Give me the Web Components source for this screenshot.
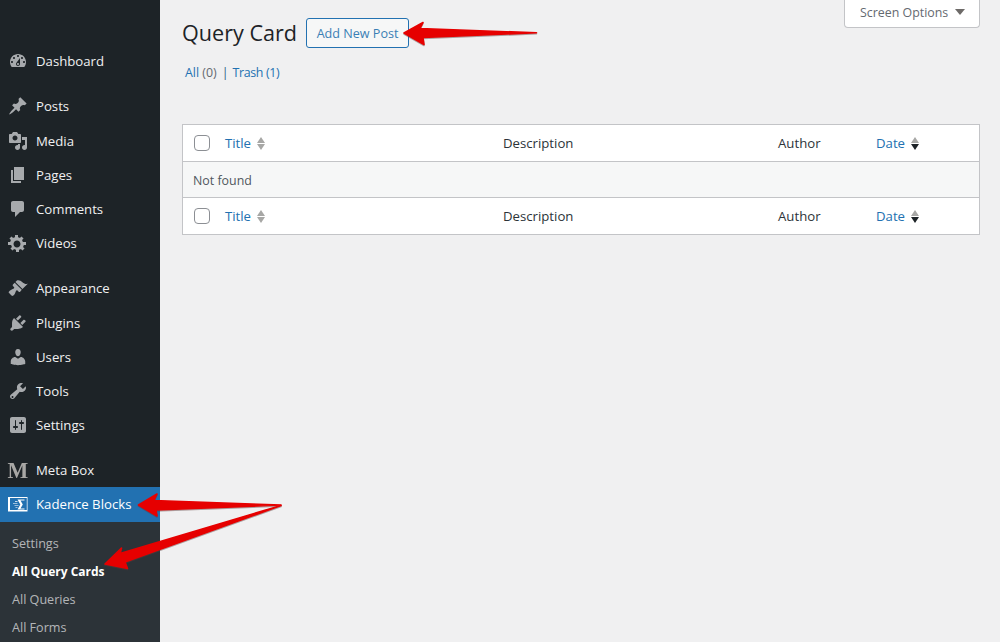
<!DOCTYPE html>
<html><head><meta charset="utf-8"><style>
html,body{margin:0;padding:0;height:642px;overflow:hidden;background:#f0f0f1;font-family:"Open Sans","Noto Sans",sans-serif}
wp-app{display:flex;height:642px;position:relative}
</style></head><body>
<wp-app>
  <wp-sidebar></wp-sidebar>
  <wp-main></wp-main>
  <wp-arrows></wp-arrows>
</wp-app>
<script>
const ICONS={
dashboard:'M3.76 16h12.48c1.1-1.37 1.76-3.11 1.76-5 0-4.42-3.58-8-8-8s-8 3.58-8 8c0 1.89.66 3.63 1.76 5zM10 4c.55 0 1 .45 1 1s-.45 1-1 1-1-.45-1-1 .45-1 1-1zM6 6c.55 0 1 .45 1 1s-.45 1-1 1-1-.45-1-1 .45-1 1-1zm8 0c.55 0 1 .45 1 1s-.45 1-1 1-1-.45-1-1 .45-1 1-1zm-5.37 5.55L12 7v6c0 1.1-.9 2-2 2s-2-.9-2-2c0-.57.24-1.08.63-1.45zM4 10c.55 0 1 .45 1 1s-.45 1-1 1-1-.45-1-1 .45-1 1-1zm12 0c.55 0 1 .45 1 1s-.45 1-1 1-1-.45-1-1 .45-1 1-1zm-5 3c0-.55-.45-1-1-1s-1 .45-1 1 .45 1 1 1 1-.45 1-1z',
post:'M10.44 3.02l1.82-1.82 6.36 6.35-1.83 1.82c-1.05-.68-2.48-.57-3.41.36l-.75.75c-.92.93-1.04 2.35-.35 3.41l-1.83 1.82-2.41-2.41-2.8 2.79c-.42.42-3.38 2.71-3.8 2.29s1.86-3.39 2.28-3.81l2.79-2.79L4.1 9.36l1.83-1.82c1.05.69 2.48.57 3.4-.36l.75-.75c.93-.92 1.05-2.35.36-3.41z',
media:'M13 11V4c0-.55-.45-1-1-1h-1.67L9 1H5L3.67 3H2c-.55 0-1 .45-1 1v7c0 .55.45 1 1 1h10c.55 0 1-.45 1-1zM7 4.5c1.38 0 2.5 1.12 2.5 2.5S8.38 9.5 7 9.5 4.5 8.38 4.5 7 5.62 4.5 7 4.5zM14 6h5v10.5c0 1.38-1.12 2.5-2.5 2.5S14 17.88 14 16.5s1.12-2.5 2.5-2.5c.17 0 .34.02.5.05V9h-3V6zm-4 8.05V13h2v3.5c0 1.38-1.12 2.5-2.5 2.5S7 17.88 7 16.5 8.12 14 9.5 14c.17 0 .34.02.5.05z',
page:'M6 15V2h10v13H6zm-1 1h8v2H3V5h2v11z',
comments:'M5 2h9c1.1 0 2 .9 2 2v7c0 1.1-.9 2-2 2h-2l-5 5v-5H5c-1.1 0-2-.9-2-2V4c0-1.1.9-2 2-2z',
gear:'M18 12h-2.18c-.17.7-.44 1.35-.81 1.93l1.54 1.54-2.1 2.1-1.54-1.54c-.58.36-1.23.64-1.91.81V19H8v-2.16c-.68-.17-1.33-.45-1.91-.81l-1.54 1.54-2.12-2.12 1.54-1.54c-.36-.58-.64-1.23-.81-1.91H0V9h2.16c.17-.68.45-1.33.81-1.91L1.43 5.55l2.12-2.12 1.54 1.54c.58-.36 1.23-.64 1.91-.81V2h3v2.16c.68.17 1.33.45 1.91.81l1.54-1.54 2.12 2.12-1.54 1.54c.36.58.64 1.23.81 1.91H18zm-9 2.5c1.93 0 3.5-1.57 3.5-3.5S10.93 7.5 9 7.5 5.5 9.07 5.5 11s1.57 3.5 3.5 3.5z',
appearance:'M14.48 11.06L7.41 3.99l1.5-1.5c.5-.56 2.3-.47 3.51.32 1.21.8 1.43 1.28 2.91 2.1 1.18.64 2.45 1.26 4.45.85zm-.71.71L6.7 4.7 4.93 6.47c-.39.39-.39 1.02 0 1.41l1.06 1.06c.39.39.39 1.03 0 1.42-.6.6-1.6 1.06-3.48 1.85-1.1.47-1.93 1.97-1.93 1.97s2.39 3.21 3.95 3.91c0 0 1.65-.92 2.19-1.99.81-1.63.92-2.87 1.51-3.46.4-.39 1.04-.39 1.43 0l1.06 1.06c.39.39 1.02.39 1.41 0z',
plugin:'M13.11 4.36L9.87 7.6 8 5.73l3.24-3.24c.35-.34 1.05-.2 1.56.32.52.51.66 1.21.31 1.55zm-8 1.77l.91-1.12 9.01 9.01-1.19.84c-.71.71-2.63 1.16-3.82 1.16H6.14L4.9 17.26c-.59.59-1.54.59-2.12 0-.59-.58-.59-1.53 0-2.12l1.24-1.24v-3.88c0-1.13.4-3.19 1.09-3.89zm7.26 3.97l3.24-3.24c.34-.35 1.04-.21 1.55.31.52.51.66 1.21.31 1.55l-3.24 3.25z',
users:'M10 9.25c-2.27 0-2.73-3.44-2.73-3.44C7 4.02 7.82 2 9.97 2c2.16 0 2.98 2.02 2.71 3.81 0 0-.41 3.44-2.68 3.44zm0 2.57L12.72 10c2.39 0 4.52 2.33 4.52 4.53v2.49s-3.65 1.13-7.24 1.13c-3.65 0-7.24-1.13-7.24-1.13v-2.49c0-2.25 1.94-4.48 4.47-4.48z',
tools:'M16.68 9.77c-1.34 1.34-3.3 1.67-4.95.99l-5.41 6.52c-.99.99-2.59.99-3.57 0-.99-.98-.99-2.58 0-3.57l6.52-5.42c-.68-1.65-.35-3.61.99-4.95 1.28-1.28 3.12-1.62 4.72-1.06l-2.89 2.89 2.82 2.82 2.86-2.86c.53 1.58.18 3.4-1.09 4.64zM3.81 16.74c.39.39 1.03.39 1.42 0 .39-.4.39-1.03 0-1.42-.39-.39-1.03-.39-1.42 0-.39.39-.39 1.02 0 1.42z',
settings:'M18 16V4c0-1.1-.9-2-2-2H4c-1.1 0-2 .9-2 2v12c0 1.1.9 2 2 2h12c1.1 0 2-.9 2-2zM8 11h1c.55 0 1 .45 1 1s-.45 1-1 1H8v1.5c0 .28-.22.5-.5.5s-.5-.22-.5-.5V13H6c-.55 0-1-.45-1-1s.45-1 1-1h1V5.5c0-.28.22-.5.5-.5s.5.22.5.5V11zm5-2h-1c-.55 0-1-.45-1-1s.45-1 1-1h1V5.5c0-.28.22-.5.5-.5s.5.22.5.5V7h1c.55 0 1 .45 1 1s-.45 1-1 1h-1v5.5c0 .28-.22.5-.5.5s-.5-.22-.5-.5V9z'
};
function def(name,html){customElements.define(name,class extends HTMLElement{constructor(){super();this.attachShadow({mode:'open'}).innerHTML=html;}});}

customElements.define('wp-menu-item',class extends HTMLElement{
  connectedCallback(){
    if(this.shadowRoot) return;
    const ic=this.getAttribute('icon');
    let g;
    if(ic==='meta') g='<span class="m">M</span>';
    else if(ic==='kadence') g='<svg class="k" width="20" height="20" viewBox="0 0 20 20"><path fill="#fff" fill-rule="evenodd" d="M0 3h19.500v14.500H0zM2 4v12h16.800V4z"/><path fill="#fff" d="M9.500 5.500h7v1.100h-4l2.300 3.900-2.300 3.900h4v1.100h-7l2.800-5z"/><path fill="#fff" opacity=".75" d="M5 9.200h4.500v.9H5zM6.500 11.200h4v.9h-4zM7 7h2.500v.9H7zM7.500 13.200h2v.9h-2z"/></svg>';
    else g=`<svg width="20" height="20" viewBox="0 0 20 20"><path fill="currentColor" d="${ICONS[ic]}"/></svg>`;
    this.attachShadow({mode:'open'}).innerHTML=`<style>
    :host{display:flex;align-items:center;height:34px;color:#f0f0f1;font-size:13.2px;box-sizing:border-box}
    :host([first]){height:35px;padding-bottom:1px}
    :host([current]){background:#2271b1;color:#fff;height:35px;padding-bottom:1px}
    .i{width:36px;flex:none;display:flex;justify-content:center;color:#a7aaad}
    :host([current]) .i{color:#fff}
    svg{display:block;margin-left:-1px}
    svg.k{margin-left:0}
    .m{font:bold 22px/20px "Liberation Serif",serif;color:#a8a7a5;height:20px;transform:scaleY(1.08)}
    </style><span class="i">${g}</span><slot></slot>`;
  }
});
def('wp-submenu-item',`<style>
 :host{display:block;height:28px;line-height:28px;padding-left:12px;font-size:12.6px;color:rgba(240,240,241,.7)}
 :host([current]){color:#fff;font-weight:700;font-size:12px}
</style><slot></slot>`);
def('wp-sidebar',`<style>
 :host{display:block;width:160px;flex:none;background:#1d2327;height:642px;overflow:hidden;padding-top:44px;box-sizing:border-box}
 .gap{height:11px}
 .sub{background:#2c3338;padding-top:8px;height:500px}
</style>
<wp-menu-item icon="dashboard">Dashboard</wp-menu-item>
<div class="gap"></div>
<wp-menu-item first icon="post">Posts</wp-menu-item>
<wp-menu-item icon="media">Media</wp-menu-item>
<wp-menu-item icon="page">Pages</wp-menu-item>
<wp-menu-item icon="comments">Comments</wp-menu-item>
<wp-menu-item icon="gear">Videos</wp-menu-item>
<div class="gap"></div>
<wp-menu-item first icon="appearance">Appearance</wp-menu-item>
<wp-menu-item icon="plugin">Plugins</wp-menu-item>
<wp-menu-item icon="users">Users</wp-menu-item>
<wp-menu-item icon="tools">Tools</wp-menu-item>
<wp-menu-item icon="settings">Settings</wp-menu-item>
<div class="gap"></div>
<wp-menu-item icon="meta">Meta Box</wp-menu-item>
<wp-menu-item icon="kadence" current>Kadence Blocks</wp-menu-item>
<div class="sub">
<wp-submenu-item>Settings</wp-submenu-item>
<wp-submenu-item current>All Query Cards</wp-submenu-item>
<wp-submenu-item>All Queries</wp-submenu-item>
<wp-submenu-item>All Forms</wp-submenu-item>
</div>`);
def('wp-screen-options',`<style>
 :host{display:flex;align-items:center;position:absolute;top:-1px;right:20px;width:136px;height:29px;box-sizing:border-box;background:#fff;border:1px solid #c3c4c7;border-top:none;border-radius:0 0 4px 4px;font-size:12.4px;color:#646970;padding:0 0 2px 15px;gap:7px}
 i{width:0;height:0;border-left:5px solid transparent;border-right:5px solid transparent;border-top:6px solid #6d6a68}
</style><span>Screen Options</span><i></i>`);
def('wp-sort',`<style>
 :host{display:inline-flex;flex-direction:column;gap:1px;margin-left:5.5px}
 i{display:block;width:0;height:0;border-left:4.5px solid transparent;border-right:4.5px solid transparent}
 .u{border-bottom:6.5px solid #a7a7a5}
 .d{border-top:6.5px solid #a7a7a5}
 :host([desc]) .d{border-top-color:#1d2327}
</style><i class="u"></i><i class="d"></i>`);
def('wp-check',`<style>:host{display:block;width:16px;height:16px;box-sizing:border-box;border:1px solid #8c8f94;border-radius:4px;background:#fff}</style>`);
def('wp-table-row',`<style>
 :host{display:grid;grid-template-columns:31px 278px 275px 98px 1fr;align-items:center;height:36px;font-size:13.2px;color:#2c3338;background:#fff;padding-left:11px;box-sizing:border-box}
 a{color:#2271b1;display:inline-flex;align-items:center}
</style>
<wp-check></wp-check>
<span><a>Title<wp-sort></wp-sort></a></span>
<span>Description</span>
<span>Author</span>
<span><a>Date<wp-sort desc></wp-sort></a></span>`);
def('wp-table',`<style>
 :host{display:block;border:1px solid #c3c4c7;background:#fff;margin-top:41px}
 .nf{height:35px;box-sizing:border-box;height:37px;display:flex;align-items:center;padding:1px 0 0 10px;font-size:12.4px;color:#50575e;background:#f6f7f7;border-top:1px solid #c3c4c7;border-bottom:1px solid #c3c4c7}
</style>
<wp-table-row></wp-table-row>
<div class="nf">Not found</div>
<wp-table-row></wp-table-row>`);
def('wp-main',`<style>
 :host{display:block;flex:1;padding:0 20px 0 22px;position:relative;box-sizing:border-box}
 header{display:flex;align-items:center;height:34px;margin-top:16px}
 h1{margin:0;font-size:21.6px;font-weight:400;color:#1d2327;line-height:34px}
 .btn{margin-left:9px;height:30px;box-sizing:border-box;width:103px;display:flex;align-items:center;justify-content:center;border:1px solid #2271b1;border-radius:3px;background:#f6f7f7;color:#3a7fb5;font-size:12.6px;white-space:nowrap}
 nav{font-size:12.4px;line-height:20px;margin-top:13px;padding-left:3px;color:#2c5a85;display:flex;white-space:pre}
 nav a{color:#2271b1}
 nav span{color:#646970}
 nav b{font-weight:400;margin:0 4px 0 5px}
 nav a.t{letter-spacing:-.35px}
</style>
<wp-screen-options></wp-screen-options>
<header><h1>Query Card</h1><div class="btn">Add New Post</div></header>
<nav><a>All <span>(0)</span></a><b>|</b><a class="t">Trash <span style="color:#2271b1">(1)</span></a></nav>
<wp-table></wp-table>`);
def('wp-arrows',`<style>:host{position:absolute;left:0;top:0;width:1000px;height:642px;pointer-events:none}svg{display:block;filter:drop-shadow(0 1px .5px rgba(90,60,60,.45))}</style>
<svg width="1000" height="642" viewBox="0 0 1000 642">
<g fill="#e60000" stroke="#e60000" stroke-width="1.6" stroke-linejoin="round">
<path d="M404 33L423 22.5L420 28.5L536.5 32.8L423 37.5L424 44.5Z"/>
<path d="M138.5 505L157 494L154 500.5L281 505L156 510L157 516Z"/>
<path d="M105 564L121.5 548L120 553.5L281 505.5L125 562L127.5 568.5Z"/>
</g></svg>`);
</script>
</body></html>
